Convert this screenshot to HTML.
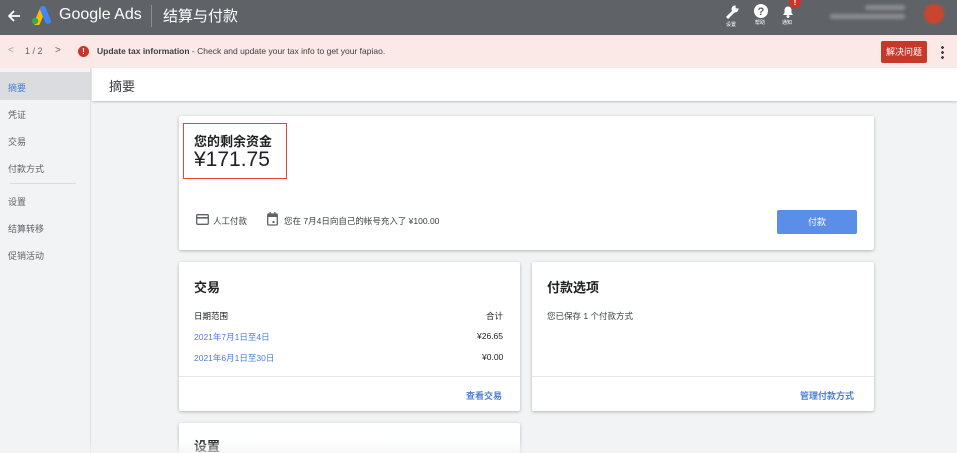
<!DOCTYPE html>
<html><head><meta charset="utf-8"><style>
*{box-sizing:border-box;margin:0;padding:0}
html,body{width:957px;height:453px;overflow:hidden}
body{background:#f1f3f4;font-family:"Liberation Sans","Noto Sans CJK SC",sans-serif;position:relative;color:#202124}
.abs{position:absolute}
.top{left:0;top:0;width:957px;height:35px;background:#5f6368}
.note{left:0;top:35px;width:957px;height:33px;background:#fbe9e7}
.side{left:0;top:68px;width:91px;height:385px;background:#f1f3f4;border-right:1px solid #e0e0e0}
.card{background:#fff;box-shadow:0 1px 3px rgba(0,0,0,.25);border-radius:2px}
.si{position:absolute;left:8px;font-size:9px;color:#5f6368}
.blue{color:#4a7fd6}
</style></head><body>
<div class="abs top"></div>
<svg class="abs" style="left:7px;top:9px" width="14" height="14" viewBox="0 0 14 14"><path d="M13 7H2M7 2L2 7l5 5" stroke="#fff" stroke-width="1.8" fill="none"/></svg>
<svg class="abs" style="left:30px;top:5px" width="22" height="20" viewBox="0 0 22 20"><path d="M7 18L13 4" stroke="#fbbc04" stroke-width="6" stroke-linecap="round"/><path d="M13 4L18 16" stroke="#4285f4" stroke-width="6" stroke-linecap="round"/><circle cx="5" cy="16" r="3.2" fill="#34a853"/></svg>
<div class="abs" style="left:59px;top:6px;font-size:16px;color:#fff">Google Ads</div>
<div class="abs" style="left:151px;top:5px;width:1px;height:22px;background:#8a8d91"></div>
<div class="abs" style="left:163px;top:5px;font-size:15px;color:#fff">结算与付款</div>
<svg class="abs" style="left:724px;top:4px" width="16" height="16" viewBox="0 0 16 16"><path d="M3 14L10 7" stroke="#fff" stroke-width="3"/><circle cx="11" cy="5" r="3.5" fill="#fff"/><circle cx="13" cy="3" r="1.5" fill="#5f6368"/></svg>
<svg class="abs" style="left:753px;top:3px" width="16" height="16" viewBox="0 0 16 16"><circle cx="8" cy="8" r="7" fill="#fff"/><text x="8" y="12" font-size="11" font-weight="bold" text-anchor="middle" fill="#5f6368" font-family="Liberation Sans">?</text></svg>
<svg class="abs" style="left:780px;top:3px" width="16" height="16" viewBox="0 0 16 16"><path d="M3 12h10l-1.5-2V7a3.5 3.5 0 0 0-7 0v3z" fill="#fff"/><circle cx="8" cy="13.5" r="1.5" fill="#fff"/></svg>
<div class="abs" style="left:789px;top:-4px;width:12px;height:12px;border-radius:50%;background:#d93025;color:#fff;font-size:9px;font-weight:bold;text-align:center;line-height:12px">!</div>
<div class="abs" style="left:726px;top:21px;font-size:5px;color:#fff">设置</div>
<div class="abs" style="left:755px;top:19px;font-size:5px;color:#fff">帮助</div>
<div class="abs" style="left:782px;top:19px;font-size:5px;color:#fff">通知</div>
<div class="abs" style="left:865px;top:5px;width:40px;height:5px;background:#8a8d91;border-radius:2px;filter:blur(1.5px)"></div>
<div class="abs" style="left:830px;top:14px;width:75px;height:5px;background:#8a8d91;border-radius:2px;filter:blur(1.5px)"></div>
<div class="abs" style="left:924px;top:4px;width:20px;height:20px;border-radius:50%;background:#c9452d;filter:blur(1px)"></div>

<div class="abs note"></div>
<div class="abs" style="left:8px;top:45px;font-size:10px;color:#9aa0a6">&lt;</div>
<div class="abs" style="left:25px;top:46px;font-size:9px;color:#5f6368">1 / 2</div>
<div class="abs" style="left:55px;top:45px;font-size:10px;color:#5f6368">&gt;</div>
<div class="abs" style="left:78px;top:46px;width:11px;height:11px;border-radius:50%;background:#c5382b;color:#fff;font-size:8px;font-weight:bold;text-align:center;line-height:11px">!</div>
<div class="abs" style="left:97px;top:46px;font-size:8.5px;color:#3c4043"><b>Update tax information</b> - Check and update your tax info to get your fapiao.</div>
<div class="abs" style="left:881px;top:41px;width:46px;height:22px;background:#c5392b;border-radius:2px;color:#fff;font-size:9px;text-align:center;line-height:22px">解决问题</div>
<div class="abs" style="left:941px;top:45px;width:3px;height:14px;background:radial-gradient(circle,#3c4043 1.3px,transparent 1.5px) 0 0/3px 5px"></div>

<div class="abs side"></div>
<div class="abs" style="left:0;top:72px;width:91px;height:28px;background:#dadce0"></div>
<div class="si blue" style="top:81px">摘要</div>
<div class="si" style="top:108px">凭证</div>
<div class="si" style="top:135px">交易</div>
<div class="si" style="top:162px">付款方式</div>
<div class="abs" style="left:10px;top:183px;width:66px;height:1px;background:#dadce0"></div>
<div class="si" style="top:195px">设置</div>
<div class="si" style="top:222px">结算转移</div>
<div class="si" style="top:249px">促销活动</div>

<div class="abs" style="left:92px;top:68px;width:865px;height:33px;background:#fff;box-shadow:0 1px 2px rgba(0,0,0,.2)"></div>
<div class="abs" style="left:109px;top:76px;font-size:13px;color:#3c4043">摘要</div>

<div class="abs card" style="left:179px;top:116px;width:695px;height:134px"></div>
<div class="abs" style="left:183px;top:123px;width:104px;height:56px;border:1.5px solid #e8452c"></div>
<div class="abs" style="left:194px;top:131px;font-size:13px;font-weight:bold;color:#202124">您的剩余资金</div>
<div class="abs" style="left:194px;top:148px;font-size:21px;color:#202124">¥171.75</div>
<svg class="abs" style="left:196px;top:214px" width="13" height="11" viewBox="0 0 13 11"><rect x=".7" y=".7" width="11.6" height="9.6" rx="1" fill="none" stroke="#5f6368" stroke-width="1.3"/><rect x="1" y="3" width="11" height="1.6" fill="#5f6368"/></svg>
<div class="abs" style="left:213px;top:215px;font-size:8.5px;color:#3c4043">人工付款</div>
<svg class="abs" style="left:267px;top:212px" width="11" height="14" viewBox="0 0 11 14"><rect x=".7" y="2" width="9.6" height="11" rx="1" fill="none" stroke="#5f6368" stroke-width="1.3"/><rect x="1" y="2" width="9" height="3" fill="#5f6368"/><rect x="2.5" y="0" width="1.3" height="3" fill="#5f6368"/><rect x="7.2" y="0" width="1.3" height="3" fill="#5f6368"/><rect x="5.5" y="9" width="2" height="2" fill="#5f6368"/></svg>
<div class="abs" style="left:284px;top:215px;font-size:8.5px;color:#3c4043">您在 7月4日向自己的帐号充入了 ¥100.00</div>
<div class="abs" style="left:777px;top:210px;width:80px;height:24px;background:#5a8ee8;border-radius:2px;color:#fff;font-size:9px;text-align:center;line-height:24px">付款</div>

<div class="abs card" style="left:179px;top:262px;width:341px;height:149px"></div>
<div class="abs" style="left:194px;top:277px;font-size:13px;font-weight:bold">交易</div>
<div class="abs" style="left:194px;top:310px;font-size:8.5px">日期范围</div>
<div class="abs" style="left:486px;top:310px;font-size:8.5px">合计</div>
<div class="abs blue" style="left:194px;top:331px;font-size:8.5px">2021年7月1日至4日</div>
<div class="abs" style="left:477px;top:331px;font-size:8.5px">¥26.65</div>
<div class="abs blue" style="left:194px;top:352px;font-size:8.5px">2021年6月1日至30日</div>
<div class="abs" style="left:482px;top:352px;font-size:8.5px">¥0.00</div>
<div class="abs" style="left:179px;top:376px;width:341px;height:1px;background:#e6e6e6"></div>
<div class="abs blue" style="left:466px;top:389px;font-size:9px;font-weight:bold">查看交易</div>

<div class="abs card" style="left:532px;top:262px;width:342px;height:149px"></div>
<div class="abs" style="left:547px;top:277px;font-size:13px;font-weight:bold">付款选项</div>
<div class="abs" style="left:547px;top:310px;font-size:8.5px;color:#3c4043">您已保存 1 个付款方式</div>
<div class="abs" style="left:532px;top:376px;width:342px;height:1px;background:#e6e6e6"></div>
<div class="abs blue" style="left:800px;top:389px;font-size:9px;font-weight:bold">管理付款方式</div>

<div class="abs card" style="left:179px;top:423px;width:341px;height:30px"></div>
<div class="abs" style="left:194px;top:436px;font-size:13px;font-weight:bold">设置</div>
<div class="abs" style="left:0;top:440px;width:957px;height:13px;background:linear-gradient(rgba(241,243,244,0),rgba(241,243,244,.7))"></div>
</body></html>
